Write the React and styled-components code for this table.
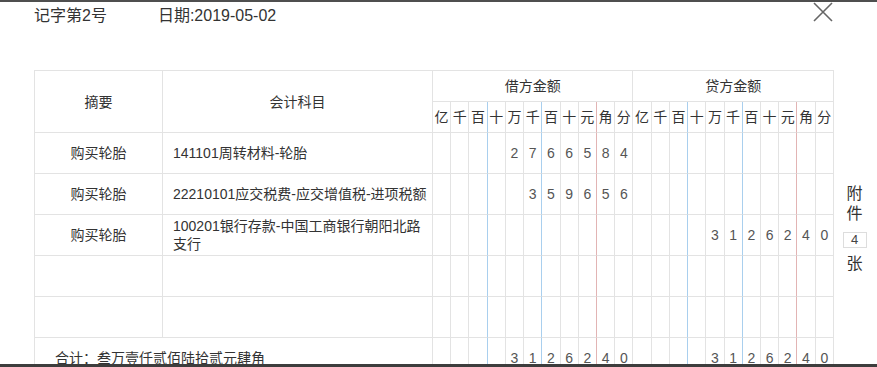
import React from 'react'
import styled, { createGlobalStyle } from 'styled-components'

const GlobalStyle = createGlobalStyle`
  html, body {
    margin: 0;
    padding: 0;
    background: #fff;
  }
  body {
    font-family: "Liberation Sans", "Noto Sans CJK SC", sans-serif;
    color: #333;
  }
`

const Page = styled.div`
  height: 367px;
  display: flex;
  flex-direction: column;
  border-top: 2px solid #4f4f4f;
  box-sizing: border-box;
  overflow: hidden;
`

const TopBar = styled.div`
  display: flex;
  align-items: center;
  height: 23px;
  padding: 0 44px 0 34px;
  gap: 51px;
  font-size: 16px;
  color: #333;
`

const Close = styled.button`
  margin-left: auto;
  width: 20px;
  height: 20px;
  padding: 0;
  border: 0;
  background: none;
  display: flex;
  margin-top: -4px;
`

const Body = styled.div`
  flex: 1;
  display: flex;
  align-items: flex-start;
  padding: 45px 0 0 34px;
  overflow: hidden;
`

const Sheet = styled.table`
  width: 800px;
  table-layout: fixed;
  border-collapse: separate;
  border-spacing: 0;
  border-top: 1px solid #e3e3e3;
  border-left: 1px solid #e3e3e3;
  font-size: 14px;
  flex-shrink: 0;
`

const Row = styled.tr`
  height: ${(p) => p.$h}px;
`

const edgeColor = { blue: '#a9cfee', red: '#e2b4b4', grey: '#e3e3e3' }

const Cell = styled.td`
  border-right: 1px solid ${(p) => edgeColor[p.$edge || 'grey']};
  border-bottom: 1px solid #e3e3e3;
  padding: ${(p) => (p.$left ? `0 3px 0 ${p.$pad || 10}px` : '0')};
  text-align: ${(p) => (p.$left ? 'left' : 'center')};
  vertical-align: middle;
  font-weight: normal;
  color: #333;
  line-height: 18px;
  box-sizing: border-box;
`

const Digit = styled(Cell)`
  color: #555;
  font-size: 14px;
`

const Side = styled.div`
  width: 25px;
  margin-left: 8px;
  padding-top: 114px;
  display: flex;
  flex-direction: column;
  align-items: center;
  font-size: 16px;
  line-height: 20px;
  color: #333;
`

const CountBox = styled.div`
  width: 24px;
  height: 16px;
  margin: 8px 0 6px;
  border: 1px solid #ddd;
  box-sizing: border-box;
  font-size: 13px;
  line-height: 14px;
  text-align: center;
  color: #444;
`

const Footer = styled.div`
  height: 3px;
  background: #3d3d3d;
  flex-shrink: 0;
`

const units = ['亿', '千', '百', '十', '万', '千', '百', '十', '元', '角', '分']

// thousands separators are blue, the yuan/jiao line is red
const edgeOf = (i) => {
  const k = i % 11
  if (k === 2 || k === 5) return 'blue'
  if (k === 8) return 'red'
  return 'grey'
}

const spread = (num) => {
  const s = (num || '').padStart(11, ' ')
  return s.split('').map((c) => (c === ' ' ? '' : c))
}

const rows = [
  { summary: '购买轮胎', account: '141101周转材料-轮胎', debit: '2766584' },
  { summary: '购买轮胎', account: '22210101应交税费-应交增值税-进项税额', debit: '359656' },
  { summary: '购买轮胎', account: '100201银行存款-中国工商银行朝阳北路支行', credit: '3126240' },
  {},
  {},
]

function Amounts({ debit, credit }) {
  const cells = [...spread(debit), ...spread(credit)]
  return cells.map((d, i) => (
    <Digit key={i} $edge={edgeOf(i)}>
      {d}
    </Digit>
  ))
}

export default function App() {
  return (
    <>
      <GlobalStyle />
      <Page>
        <TopBar>
          <span>记字第2号</span>
          <span>日期:2019-05-02</span>
          <Close aria-label='关闭'>
            <svg width='20' height='20' viewBox='0 0 20 20'>
              <path d='M1 1 L19 19 M19 1 L1 19' stroke='#666' strokeWidth='1.6' fill='none' />
            </svg>
          </Close>
        </TopBar>
        <Body>
          <Sheet>
            <colgroup>
              <col style={{ width: 128 }} />
              <col style={{ width: 270 }} />
              {units.concat(units).map((_, i) => (
                <col key={i} />
              ))}
            </colgroup>
            <thead>
              <Row $h={31}>
                <Cell as='th' rowSpan={2}>摘要</Cell>
                <Cell as='th' rowSpan={2}>会计科目</Cell>
                <Cell as='th' colSpan={11}>借方金额</Cell>
                <Cell as='th' colSpan={11}>贷方金额</Cell>
              </Row>
              <Row $h={31}>
                {units.concat(units).map((u, i) => (
                  <Cell as='th' key={i} $edge={edgeOf(i)}>
                    {u}
                  </Cell>
                ))}
              </Row>
            </thead>
            <tbody>
              {rows.map((r, i) => (
                <Row $h={41} key={i}>
                  <Cell>{r.summary}</Cell>
                  <Cell $left>{r.account}</Cell>
                  <Amounts debit={r.debit} credit={r.credit} />
                </Row>
              ))}
              <Row $h={41}>
                <Cell colSpan={2} $left $pad={20}>
                  合计：叁万壹仟贰佰陆拾贰元肆角
                </Cell>
                <Amounts debit='3126240' credit='3126240' />
              </Row>
            </tbody>
          </Sheet>
          <Side>
            <span>附</span>
            <span>件</span>
            <CountBox>4</CountBox>
            <span>张</span>
          </Side>
        </Body>
        <Footer />
      </Page>
    </>
  )
}
